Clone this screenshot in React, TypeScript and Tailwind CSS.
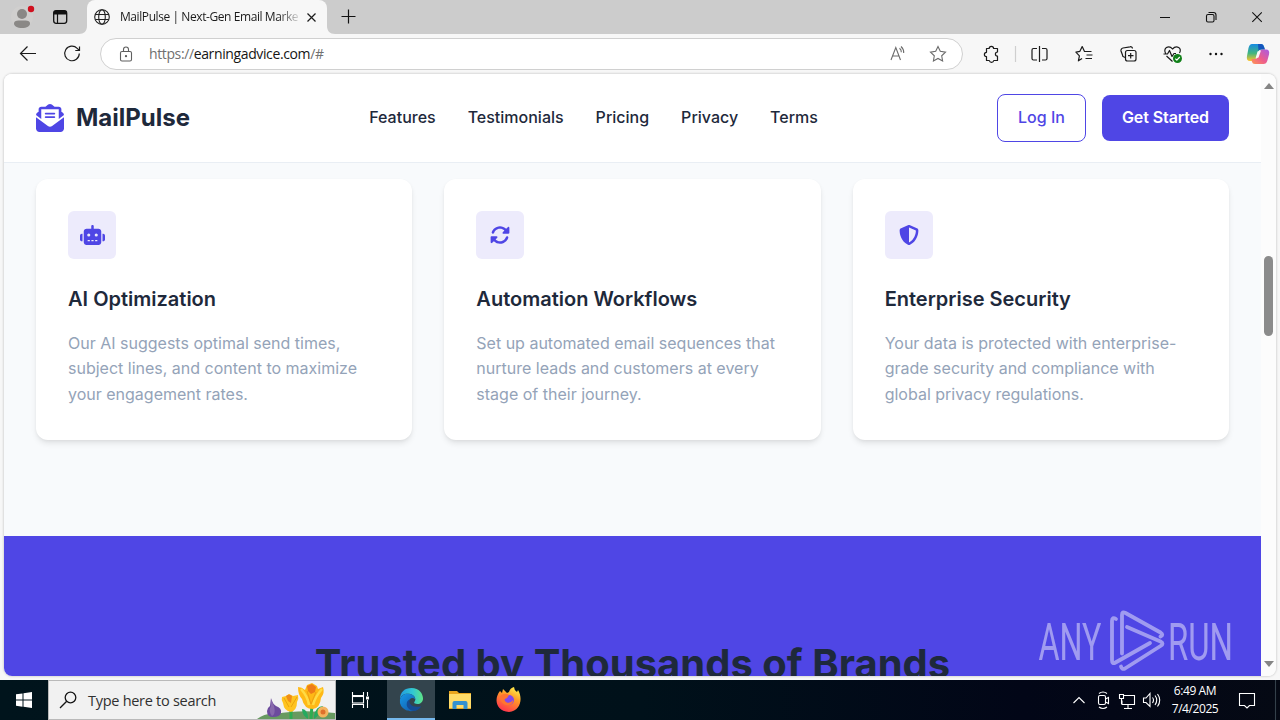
import React from "react";
import { FaEnvelopeOpenText, FaRobot, FaRotate, FaShieldHalved } from "react-icons/fa6";

const features = [
  { Icon: FaRobot, iconClass: "h-5 w-[25px]", title: "AI Optimization", text: "Our AI suggests optimal send times, subject lines, and content to maximize your engagement rates." },
  { Icon: FaRotate, iconClass: "size-5", title: "Automation Workflows", text: "Set up automated email sequences that nurture leads and customers at every stage of their journey." },
  { Icon: FaShieldHalved, iconClass: "size-5", title: "Enterprise Security", text: "Your data is protected with enterprise-grade security and compliance with global privacy regulations." },
];

const links = ["Features", "Testimonials", "Pricing", "Privacy", "Terms"];

function TitleBar() {
  return (
    <div className="flex h-[34px] shrink-0 items-stretch bg-[#cccccc]">
      <svg className="w-[87px] shrink-0" viewBox="0 0 87 34" fill="none">
        <circle cx="22" cy="17" r="11" fill="#d0cfce" />
        <circle cx="22" cy="14" r="5" fill="#8a8886" />
        <path d="M14 23.500c0-2.500 2-3 8-3s8 .5 8 3-3 4.500-8 4.500-8-2-8-4.500z" fill="#8a8886" />
        <circle cx="31" cy="9" r="3.200" fill="#d0111f" />
        <rect x="53.700" y="10.700" width="13" height="12.600" rx="2.500" stroke="#111" strokeWidth="1.300" />
        <path d="M53.500 14.500v-1.500a2.500 2.500 0 0 1 2.500-2.500h8.500a2.500 2.500 0 0 1 2.500 2.500v1.500z" fill="#111" />
        <path d="M57.500 14v9" stroke="#111" strokeWidth="1.200" />
        <path d="M79 34h8v-8c0 5-3 8-8 8z" fill="#f7f7f7" />
      </svg>
      <div className="flex w-[240px] items-center rounded-t-lg bg-[#f7f7f7] pl-[7px]">
        <svg width="16" height="16" viewBox="0 0 16 16" fill="none" stroke="#222" strokeWidth="1.100">
          <circle cx="8" cy="8" r="7.300" /><ellipse cx="8" cy="8" rx="3.300" ry="7.300" /><path d="M1.300 5.500h13.400M1.300 10.500h13.400" />
        </svg>
        <div className="ml-[10px] w-[180px] overflow-hidden whitespace-nowrap font-['Open_Sans','Noto_Sans',sans-serif] text-[12px] tracking-[-0.42px] text-[#1b1b1b] [mask-image:linear-gradient(to_right,#000_158px,transparent_182px)]">MailPulse | Next-Gen Email Marke</div>
        <svg className="ml-[6px]" width="11" height="11" viewBox="0 0 11 11" stroke="#1b1b1b" strokeWidth="1.200"><path d="M1.500 1.500l8 8M9.500 1.500l-8 8" /></svg>
      </div>
      <svg className="w-[60px]" viewBox="0 0 60 34" fill="none">
        <path d="M0 26c0 5 3 8 8 8h-8z" fill="#f7f7f7" />
        <path d="M21.500 9.500v14M14.500 16.500h14" stroke="#111" strokeWidth="1.200" />
      </svg>
      <svg className="ml-auto w-[140px]" viewBox="1140 0 140 34" fill="none" stroke="#111" strokeWidth="1.100">
        <path d="M1160 17.500h10M1252.300 12.300l9.500 9.500M1261.800 12.300l-9.500 9.500" />
        <rect x="1206.500" y="14.500" width="7.500" height="7.500" rx="1.500" />
        <path d="M1208.500 12.500h5a2.500 2.500 0 0 1 2.500 2.500v5" />
      </svg>
    </div>
  );
}

function Toolbar() {
  return (
    <div className="flex h-10 shrink-0 items-center bg-[#f7f7f7]">
      <svg className="w-[100px] shrink-0" height="40" viewBox="0 34 100 40" fill="none" stroke="#1b1b1b" strokeWidth="1.200">
        <path d="M36 53.500H20.500M27.500 46.500l-7 7 7 7" />
        <path d="M79.300 53.500a7.300 7.300 0 1 1-2.100-5.200l1.800 1.900M79.500 46.500v4h-4.200" />
      </svg>
      <div className="flex h-8 w-[863px] items-center rounded-full border border-[#d0d0d0] bg-white pl-[18px] pr-3">
        <svg width="14" height="16" viewBox="0 0 14 16" fill="none" stroke="#5f5f5f" strokeWidth="1.100">
          <rect x="1.500" y="5.500" width="11" height="9.500" rx="1.500" /><path d="M4.500 5.500V3.500a2.500 2.500 0 0 1 5 0v2" /><circle cx="7" cy="10.200" r=".6" fill="#555" />
        </svg>
        <span className="ml-[16px] whitespace-nowrap pb-px font-['Open_Sans','Noto_Sans',sans-serif] text-[14px] tracking-[-0.38px] text-[#707070]">https://<span className="text-[#151515]">earningadvice.com</span>/#</span>
        <svg className="ml-auto shrink-0" width="62" height="20" viewBox="888 44 62 20" fill="none" stroke="#6b6b6b" strokeWidth="1.100">
          <path d="M891 60l4.800-12.500L900.500 60M892.800 56h6M899.500 48.200q2 1.500 1.800 4M901 46.500q3 2.700 2.700 6.500" />
          <path d="M938 46.500l2.300 4.800 5.200.8-3.800 3.700.9 5.200-4.600-2.500-4.600 2.500.9-5.200-3.800-3.700 5.200-.8z" />
        </svg>
      </div>
      <svg className="w-[317px] shrink-0" height="40" viewBox="963 34 317 40" fill="none" stroke="#1b1b1b" strokeWidth="1.200" strokeLinejoin="round">
        <path d="M986.500 48.500h2.700a2.200 2.200 0 0 1 4.400 0h3.900v3.500a2.100 2.100 0 0 0 0 4.200v4.300h-3.700a2.300 2.300 0 0 1-4.500 0h-2.800v-4a2.100 2.100 0 0 1 0-4.200z" />
        <path d="M1015.500 46v16" stroke="#cfcfcf" />
        <path d="M1039.500 46v16M1037 48.500h-3.500a1.500 1.500 0 0 0-1.500 1.500v8.500a1.500 1.500 0 0 0 1.500 1.500h3.500M1042 48.500h3.500a1.500 1.500 0 0 1 1.500 1.500v8.500a1.500 1.500 0 0 1-1.500 1.500h-3.500" />
        <path d="M1088 51.500h-3.500l-2.300-5-2.300 4.800-4 .8 3.500 3.700-1 5 3.700-2.200M1085.500 51.500h6M1086.500 55h6M1085.500 58.500h6.500" />
        <path d="M1125.500 57.500l-1.500-.5a2 2 0 0 1-1.500-2l-1.500-4a2.500 2.500 0 0 1 2-3l7-1.200a2 2 0 0 1 2.500 1.700" />
        <rect x="1125.500" y="50.500" width="10.500" height="10.500" rx="2" /><path d="M1130.700 53v5.500M1128 55.700h5.500" />
        <path d="M1166 54c-4-6 3-9.500 6.500-5 4-4.500 10-1 7 4M1166.500 56l6 5.500M1163.500 54h4l2-3.500 2.500 6 2-3h2" />
        <circle cx="1177.500" cy="58.500" r="4.500" fill="#118019" stroke="none" /><path d="M1175.300 58.600l1.500 1.600 3-3.200" stroke="#fff" />
        <g fill="#111" stroke="none"><circle cx="1210.500" cy="54" r="1.200" /><circle cx="1216" cy="54" r="1.200" /><circle cx="1221.500" cy="54" r="1.200" /></g>
        <defs>
          <linearGradient id="copilotA" x1="0" y1="0" x2="0" y2="1"><stop stopColor="#168be4" /><stop offset=".55" stopColor="#42b67e" /><stop offset="1" stopColor="#ffc42b" /></linearGradient>
          <linearGradient id="copilotB" x1="1" y1="0" x2="0" y2="1"><stop stopColor="#a75be6" /><stop offset=".55" stopColor="#ee5d8b" /><stop offset="1" stopColor="#ff9752" /></linearGradient>
        </defs>
        <g stroke="none">
          <path d="M1252 44h9q2.500 0 3.200 3l.8 2.500h-4q-2 0-2.800 2.500l-2 6.500q-.8 2.500-3 2.500h-3.200q-4 0-3-5l1.500-8q1-4 3.500-4z" fill="url(#copilotA)" />
          <path d="M1258 44h3.200q2 0 2.800 3l.8 2.500h-4q-1.500 0-2.300 1z" fill="#1555bd" />
          <path d="M1263.500 49.500h2.500q4 0 3 5l-1.600 6q-1 3.500-4 3.500h-8.500q-2.500 0-3-2.500l-.5-2.500h3.500q2 0 2.800-2.500l1.600-5q.8-2 4.200-2z" fill="url(#copilotB)" />
          <path d="M1257.500 51.500l3.500-1-2.500 7-3 1z" fill="#f7f7f7" />
        </g>
      </svg>
    </div>
  );
}

function AnyRunMark() {
  return (
    <svg className="absolute left-[1030px] top-[526px] overflow-visible" width="210" height="76" viewBox="1030 600 210 76" fill="none" opacity=".46">
      <g fill="#fff" fontFamily="Roboto, sans-serif" fontWeight="400" fontSize="52">
        <text x="1038.500" y="660" textLength="63" lengthAdjust="spacingAndGlyphs">ANY</text>
        <text x="1168" y="660" textLength="65" lengthAdjust="spacingAndGlyphs">RUN</text>
      </g>
      <g stroke="#fff" strokeWidth="3.800" strokeLinejoin="round" strokeLinecap="round">
        <path d="M1116 619q-4-2.500-4 2v39q0 4.500 3.500 2.500l34.500-19.500" />
        <path d="M1122 653.500v-38.500q0-4 3.500-2l35 19.500q3.500 2.500 0 4" />
        <path d="M1127 627l33.500 14.500q4 2 0 4.500l-35.500 22.500q-3 1.500-4-2" />
      </g>
    </svg>
  );
}

function WebPage() {
  return (
    <div className="flex min-w-0 flex-1 flex-col overflow-hidden bg-[#f8fafc] font-['Inter',sans-serif] text-base leading-[1.6] text-[#1e293b]">
      <header className="flex h-[89px] shrink-0 items-center justify-between border-b border-[#e9eef4] bg-white px-8">
        <div className="flex items-center gap-3 text-2xl font-bold">
          <FaEnvelopeOpenText className="size-7 text-[#4f46e5]" />
          <span>MailPulse</span>
        </div>
        <nav className="flex gap-8 font-medium">{links.map((link) => <a key={link}>{link}</a>)}</nav>
        <div className="flex items-center gap-4">
          <button className="rounded-lg border border-[#4f46e5] px-5 py-2.5 font-medium text-[#4f46e5]">Log In</button>
          <button className="rounded-lg bg-[#4f46e5] px-5 py-2.5 font-semibold tracking-[-0.09px] text-white">Get Started</button>
        </div>
      </header>
      <section className="grid shrink-0 grid-cols-3 gap-8 px-8 pb-[96.4px] pt-[15.8px]">
        {features.map(({ Icon, iconClass, title, text }) => (
          <article key={title} className="rounded-xl bg-white p-8 shadow-[0_4px_6px_-1px_rgba(0,0,0,0.1),0_1px_3px_rgba(0,0,0,0.04)]">
            <div className="mb-6 flex size-12 items-center justify-center rounded-md bg-[#edebfc]"><Icon className={`${iconClass} text-[#4f46e5]`} /></div>
            <h3 className="mb-4 text-xl font-semibold leading-8">{title}</h3>
            <p className="text-[#94a3b8]">{text}</p>
          </article>
        ))}
      </section>
      <section className="flex flex-1 justify-center overflow-hidden bg-[#4f46e5] pt-24">
        <h2 className="whitespace-nowrap text-[40px] font-bold leading-[64px]">Trusted by Thousands of Brands</h2>
      </section>
    </div>
  );
}

function Taskbar() {
  return (
    <div className="flex h-10 shrink-0 bg-[linear-gradient(90deg,#00141c,#00111a_50%,#020617_80%,#050914)] font-['Open_Sans','Noto_Sans',sans-serif]">
      <svg className="w-12 shrink-0" viewBox="0 0 48 40"><path d="M16 14.300l6.500-.9v6.100H16zM23.500 13.200l8.500-1.200v7.500h-8.500zM16 20.500h6.500v6.200l-6.500-.9zM23.500 20.500H32V28l-8.500-1.200z" fill="#fff" /></svg>
      <div className="flex w-72 items-center border border-[#b9b9b9] bg-[#f1f1f1]">
        <svg className="ml-2.5 shrink-0" width="18" height="18" viewBox="0 0 18 18" fill="none" stroke="#151515" strokeWidth="1.300"><circle cx="11.500" cy="6.500" r="5.300" /><path d="M7.700 10.300L1 17" /></svg>
        <span className="ml-[11px] whitespace-nowrap pt-0.5 text-[14.500px] tracking-[-0.28px] text-[#303030]">Type here to search</span>
        <svg className="ml-auto shrink-0" width="78" height="38" viewBox="257 681 78 38">
          <path d="M257 719q8-6 19-5 24-5 59-1v6z" fill="#679a60" />
          <path d="M291 719v-14M311 719l1-15" stroke="#2fac52" strokeWidth="3" />
          <path d="M314 716q2-10 9-10-2 8-9 13zM308 717q-1-8-6-8 0 6 6 10z" fill="#24aa60" />
          <path d="M271 698q1 5 5 8 6 2 5 7-1 4-8 4-6 0-6-6 0-3 3-5z" fill="#6c4b9d" /><path d="M271 699l0 7q-3 5 1 10 4-2 2-10z" fill="#8768ac" />
          <path d="M282 697l4-1 3-2 4 2 5-1q1 4-1 7 0 8-6 10-7-1-8-9-2-3-1-6z" fill="#ffc320" /><path d="M286 696q3-3 6 0l-1 7-3-2z" fill="#ef8d17" /><path d="M284 698l5 9M297 697l-6 10" stroke="#e9a60d" />
          <path d="M298 687q4 0 7 3l2-5 5-2 5 3 1 3 5-2q2 6-2 11-1 10-8 11-9 0-11-10-4-4-4-12z" fill="#ffb916" /><path d="M307 686l5-2 4 3-1 5-4 2-3-3z" fill="#ee7c18" /><path d="M301 689q7 8 8 16M322 689q-7 8-9 16" stroke="#ffdb45" strokeWidth="2.500" fill="none" /><path d="M307 691l4 13 5-12" stroke="#eea011" fill="none" />
          <circle cx="323" cy="712" r="5.500" fill="#f3b35e" /><circle cx="323" cy="712" r="2.500" fill="#df702c" />
        </svg>
      </div>
      <svg className="w-[51px]" viewBox="336 680 51 40" fill="none" stroke="#fff" strokeWidth="1.100">
        <path d="M352.500 692v3.500h11V692M352.500 708v-3.500h11v3.500M367.500 692v4M367.500 700v8" /><rect x="352.500" y="696.500" width="11" height="6.500" /><path d="M366 696.500h3v3h-3z" fill="#fff" stroke="none" />
      </svg>
      <div className="flex w-12 items-center justify-center border-b-2 border-[#76b9ed] bg-[#33444d]">
        <svg width="25" height="25" viewBox="0 0 26 26">
          <defs><linearGradient id="edgeTop"><stop stopColor="#229be0" /><stop offset=".55" stopColor="#31c7d3" /><stop offset="1" stopColor="#5ee486" /></linearGradient><linearGradient id="edgeBottom" x1="0" y1="0" x2="1" y2="1"><stop stopColor="#1699e8" /><stop offset="1" stopColor="#1351a0" /></linearGradient></defs>
          <path d="M1 13C1 5 6 1 13 1c8 0 12 6 12 11 0 5-5 7-9 5-1-1 1-2 1-4 0-4-4-6-8-6-4 0-7 2-8 6z" fill="url(#edgeTop)" />
          <path d="M1 13Q3 7 9 7c5 0 8 3 8 6q-3-3-6 0c-3 5 2 10 11 8-5 5-11 5-15 3Q0 20 1 13z" fill="url(#edgeBottom)" />
          <path d="M11 13q-3 1-3 5c0 4 4 7 8 7 4-1 6-3 7-5-9 2-13-2-12-7z" fill="#164b93" />
        </svg>
      </div>
      <svg className="w-[110px]" viewBox="435 680 110 40">
        <defs><linearGradient id="foxBody" x1=".8" y1="0" x2=".3" y2="1"><stop stopColor="#fff44f" /><stop offset=".4" stopColor="#ff9b27" /><stop offset="1" stopColor="#ff304f" /></linearGradient></defs>
        <path d="M449 691h8l2 2h12v16h-22z" fill="#e9a51e" /><path d="M449 694h22v14h-22z" fill="#ffdb68" /><path d="M452.500 709v-6q0-2 2-2h11q2 0 2 2v6h-4v-4h-7v4z" fill="#3391cf" />
        <path d="M500 691l2 2 1-4 4 4 2-1q1-4 5-5 0 3 3 5l1-2c5 8 3 21-9 22-14-1-15-14-9-21z" fill="url(#foxBody)" />
        <circle cx="509" cy="700" r="5" fill="#824aeb" /><path d="M500 696q5-4 9-1l-2 3c-2 1-3 1-2 3 2 3 6 2 8-1 1 7-13 8-13-4z" fill="#ff7530" />
      </svg>
      <svg className="ml-auto w-[102px]" viewBox="1066 680 102 40" fill="none" stroke="#fff" strokeWidth="1.100">
        <path d="M1073.500 703l5.500-5.500 5.500 5.500" />
        <rect x="1098.500" y="695.500" width="7" height="9" rx="1.500" /><path d="M1105.500 699l3-1.500v6l-3-1.500M1099 693.500q4-3 8 0M1099 707q4 3 8 0" />
        <path d="M1124 695.500h10.500v9H1122v-4M1128 705v3M1124 708.500h8M1119.500 694.500h4v4h-4zM1121.500 699v5" />
        <path d="M1143.500 698v4.500h2.500l4 4v-13l-4 4.500zM1152.500 697.500q2 2.500 0 5.500M1155 695.500q3.500 4.500 0 9.500M1157.500 694q4.500 6 0 12.500" />
      </svg>
      <div className="w-[54px] whitespace-nowrap pt-0.5 text-center text-[12px] leading-[18px] tracking-[-0.42px] text-white"><div>6:49 AM</div><div>7/4/2025</div></div>
      <svg className="w-[58px]" viewBox="1222 680 58 40" fill="none" stroke="#fff" strokeWidth="1.100"><path d="M1239.500 693.500h15v12h-5l-2.500 2.500-2.500-2.500h-5z" /><path d="M1275.500 680v40" stroke="#34404a" /></svg>
    </div>
  );
}

export default function App() {
  return (
    <div className="flex h-[720px] w-[1280px] flex-col overflow-hidden bg-[#f7f7f7]">
      <TitleBar />
      <Toolbar />
      <div className="relative mb-1 min-h-0 flex-1 px-1">
        <main className="flex h-full overflow-hidden rounded-lg shadow-[0_0_2px_1px_rgba(0,0,0,0.12)]">
          <WebPage />
          <div className="flex w-[15px] shrink-0 flex-col items-center bg-[#fcfcfc] py-[9px]">
            <svg width="10" height="6" viewBox="0 0 10 6" fill="#858585"><path d="M0 6L5 0l5 6z" /></svg>
            <div className="mt-[167px] h-20 w-[9px] rounded-full bg-[#8b8b8b]" />
            <svg className="mt-auto" width="10" height="6" viewBox="0 0 10 6" fill="#858585"><path d="M0 0h10L5 6z" /></svg>
          </div>
        </main>
        <AnyRunMark />
      </div>
      <Taskbar />
    </div>
  );
}
